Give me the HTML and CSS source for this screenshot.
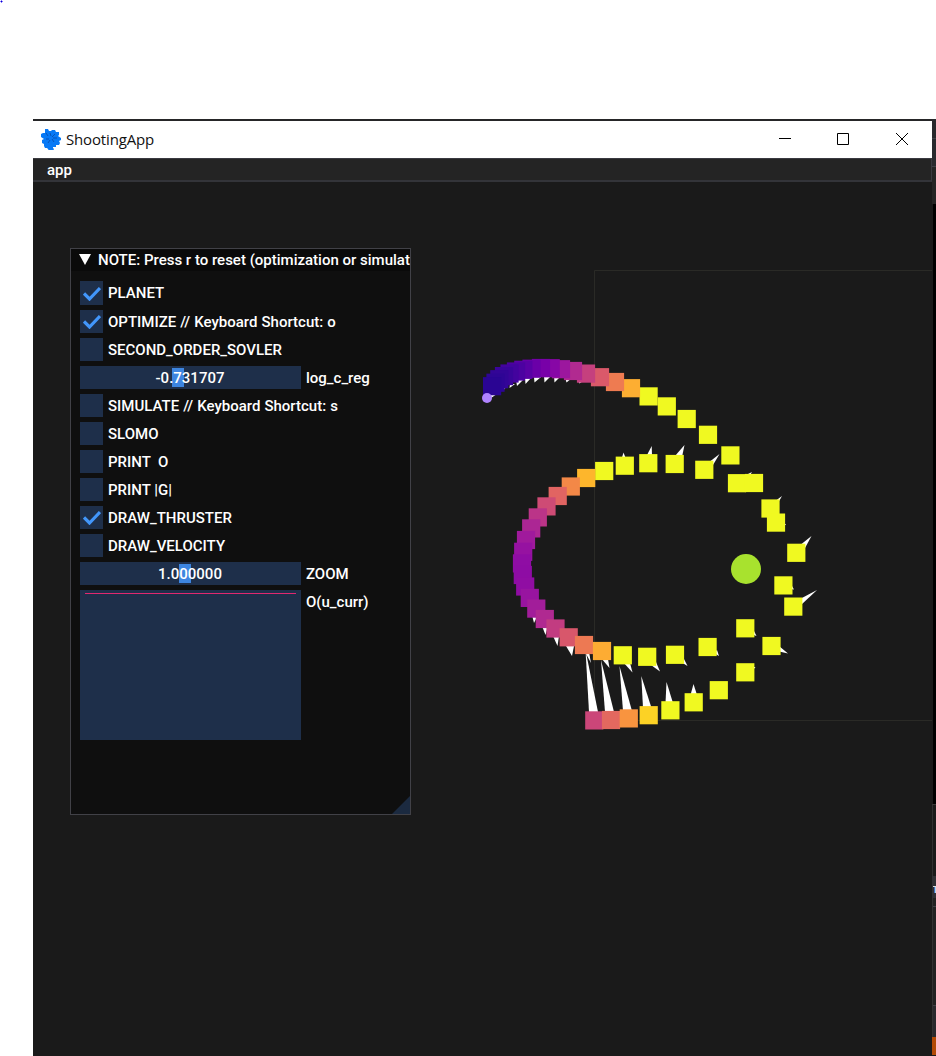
FILE: index.html
```html
<!DOCTYPE html>
<html lang="en">
<head>
<meta charset="utf-8">
<title>ShootingApp</title>
<link rel="stylesheet" href="styles.css">
</head>
<body>
<div class="desktop">
  <svg class="speck" width="3" height="3"><path d="M0 1.500h3M1.500 0v3" stroke="#8078ff"/><path d="M1 1h1v1h-1z" fill="#1000c0"/></svg>
  <div class="backdrop">
    <main class="window">
      <header class="titlebar">
        <svg class="logo" width="22" height="22" viewBox="0 0 22 22">
          <path d="M5 1h3l1 2h2l1-1h3l1 2h3v3l-1 1 3 2v2l-2 1 1 2-1 2h-3v2h-3v1l1 1-1 2h-4l-1-2-1-1H5l-1-2v-2l-2-1 0-3 2-1-3-2V6l2-1h2z" fill="#0879f5"/>
          <path d="M6 5l2 3M10 5l1 3M15 6l-3 3M6 11h3M8 15l2-3M14 14l-2-3M17 10l-4 0" stroke="#0753b8" fill="none"/>
        </svg>
        <span class="app-name">ShootingApp</span>
        <svg class="controls" width="130" height="14" viewBox="0 0 130 14" fill="none" stroke="#000">
          <path d="M0 5.500h12"/><path d="M58.500 .5h11v11h-11z"/><path d="M117 0l12 12M129 0l-12 12"/>
        </svg>
      </header>
      <nav class="menubar"><span>app</span></nav>
      <div class="canvas">
        <svg class="scene" id="scene" width="899" height="874" viewBox="33 182 899 874">
          <path d="M932 270.500H594.500V720.500H932" fill="none" stroke="#2a2a26"/>
          <circle cx="746" cy="569" r="15" fill="#a8e22e"/>
          <g id="thrust" fill="#fff"></g>
          <g id="trail"></g>
          <circle cx="487" cy="398" r="5" fill="#b083ff"/>
        </svg>
        <section class="panel">
          <div class="panel-title"><svg width="13" height="11"><path d="M0 0h12L6 11z" fill="#fff"/></svg><span>NOTE: Press r to reset (optimization or simulat</span></div>
          <div class="rows">
            <div class="row first"><i class="box on"><svg width="18" height="15"><path d="M1 7.500l5.500 5.500L17 2" /></svg></i><span>PLANET</span></div>
            <div class="row wide"><i class="box on"><svg width="18" height="15"><path d="M1 7.500l5.500 5.500L17 2" /></svg></i><span>OPTIMIZE // Keyboard Shortcut: o</span></div>
            <div class="row"><i class="box"></i><span>SECOND_ORDER_SOVLER</span></div>
            <div class="row"><div class="slider"><b class="grab g1"></b><span>-0.731707</span></div><span>log_c_reg</span></div>
            <div class="row wide"><i class="box"></i><span>SIMULATE // Keyboard Shortcut: s</span></div>
            <div class="row"><i class="box"></i><span>SLOMO</span></div>
            <div class="row"><i class="box"></i><span>PRINT  O</span></div>
            <div class="row"><i class="box"></i><span>PRINT |G|</span></div>
            <div class="row"><i class="box on"><svg width="18" height="15"><path d="M1 7.500l5.500 5.500L17 2" /></svg></i><span>DRAW_THRUSTER</span></div>
            <div class="row"><i class="box"></i><span>DRAW_VELOCITY</span></div>
            <div class="row"><div class="slider"><b class="grab g2"></b><span>1.000000</span></div><span>ZOOM</span></div>
            <div class="row plot-row"><div class="plot"></div><span>O(u_curr)</span></div>
          </div>
          <svg class="grip" width="18" height="18"><path d="M18 0v18H0z" fill="#1b2a40"/></svg>
        </section>
      </div>
    </main>
    <aside class="edge">
      <div class="e1"></div><div class="e2"></div><div class="e3"></div><div class="e4"></div><div class="e5"></div><div class="e6"></div><div class="e7"></div><div class="e8"></div>
    </aside>
  </div>
</div>
<script src="scene.js"></script>
</body>
</html>
```

FILE: styles.css
```css
body { margin: 0; background: #fff; font-family: Roboto, sans-serif; }
.desktop { width: 936px; height: 1056px; overflow: hidden; display: flex; flex-direction: column; }
.speck { display: block; flex: none; }
.backdrop { margin: 116px 0 0 33px; height: 937px; display: flex; background: #262628; }
.window { width: 899px; padding-top: 2px; display: flex; flex-direction: column; }
.titlebar { height: 37px; background: #fff; display: flex; align-items: center; }
.logo { margin-left: 7px; margin-top: -1px; }
.app-name { margin: -2px 0 0 4px; width: 92px; font: 15px/20px "Open Sans", sans-serif; color: #111; letter-spacing: -.15px; white-space: nowrap; }
.controls { margin-left: 621px; }
.menubar { box-sizing: border-box; height: 24px; background: #242424; border: 1px solid #3a3a40; border-left: 0; border-bottom: 2px solid #333439; padding-left: 14px; color: #fff; font-size: 15px; font-weight: 500; line-height: 22px; }
.canvas { height: 874px; background: #1a1a1a; position: relative; }
.scene { display: block; }
.panel { position: absolute; left: 37px; top: 66px; width: 339px; height: 565px; border: 1px solid #414147; background: #0f0f0f; color: #fff; font-size: 15px; font-weight: 500; overflow: hidden; }
.panel-title { height: 22px; background: #0a0a0a; display: flex; align-items: center; gap: 6px; padding-left: 8px; white-space: nowrap; }
.panel-title svg { flex: none; margin-top: -1px; }
.rows { padding: 10px 9px; display: flex; flex-direction: column; gap: 5px; }
.row { height: 23px; display: flex; gap: 5px; line-height: 25px; white-space: pre; }
.wide { word-spacing: .3px; }
.first { height: 24px; }
.box { width: 23px; background: #1e2f4a; display: flex; align-items: center; justify-content: center; }
.box path { fill: none; stroke: #4296fa; stroke-width: 3.2; }
.slider { width: 220px; padding-right: 1px; background: #1e2f4a; position: relative; text-align: center; }
.slider span { position: relative; }
.grab { position: absolute; top: 2px; width: 12px; height: 19px; background: #3d85e0; }
.g1 { left: 92px; }
.g2 { left: 99px; }
.plot-row { height: 150px; }
.plot { width: 211px; height: 147px; padding: 3px 5px 0; background: #1e2f4a; }
.plot::before { content: ""; display: block; height: 1px; background: #e02870; }
.grip { position: absolute; right: 0; bottom: 0; }
.edge { width: 4px; display: flex; flex-direction: column; background: #1a1a1a; }
.e1 { height: 19px; background: #29292c; border-bottom: 1px solid #404046; }
.e2 { height: 27px; background: #292a2e; border-bottom: 1px solid #404046; }
.e3 { height: 37px; background: #252525; }
.e4 { height: 600px; margin-left: 1px; background: #000; }
.e5 { height: 71px; border-top: 1px solid #3a3a3a; border-left: 1px solid #303030; background: #1a1a1a; }
.e6 { height: 22px; background: #303034; display: flex; }
.e6::before { content: ""; margin: 10px 0 0 1px; width: 3px; height: 7px; box-sizing: border-box; border-top: 1px solid #ddd; background: linear-gradient(90deg, #303034 1px, #3f6fc0 1px, #3f6fc0 2px, #b5d5e5 2px); }
.e7 { height: 139px; border-left: 1px solid #323232; background: linear-gradient(#222 8px, #414146 8px, #414146 9px, #222 9px, #222 107px, #414146 107px, #414146 108px, #29292d 108px); }
.e8 { height: 18px; background: #b24a06; }
```

FILE: scene.js
```js
const NS = "http://www.w3.org/2000/svg";
const Y = "#f0f921";

// Trajectory samples in time order: centre x, centre y, colour.
const samples = [
  [594.3,720.4,"#cb4679"],[611,720,"#e3685f"],[628.8,718.4,"#f9943f"],[648.7,715.2,"#fcd225"],
  [670.4,710.3,Y],[693.7,702.3,Y],[718.8,690.2,Y],[745.3,672.3,Y],[771.5,646,Y],[793.3,606.6,Y],
  [796.3,552.8,Y],[770.5,508.5,Y],[737,483.2,Y],[704.3,469.8,Y],[674.7,464,Y],[648.3,463.2,Y],
  [624.8,465.7,Y],[604.2,471,Y],[586.2,478,"#fdb62c"],[570.8,486.5,"#f38847"],[557.7,496,"#e16462"],
  [546.5,506.4,"#ce4b75"],[537.8,517.4,"#bb3488"],[531.2,528.4,"#ac2694"],[526,540,"#a01a9c"],
  [523.2,551.8,"#9612a1"],[522,563.4,"#8f0da4"],[522.8,575,"#8e0ca4"],[525.2,586.5,"#900da3"],
  [529.8,597.9,"#9814a0"],[536.3,608.6,"#a21d9a"],[544.8,619,"#b02991"],[555.5,628.5,"#c23c81"],
  [568.7,637.3,"#d8576b"],[584,645,"#ed7953"],[602,651,"#fdac33"],[622.8,655.3,Y],[647.2,656.8,Y],
  [675,654.8,Y],[707.6,647,Y],[745.3,628.3,Y],[783.4,585.4,Y],[776,522.6,Y],[754,483,Y],
  [730.4,455.4,Y],[708,434.8,Y],[686.7,419,Y],[666.8,406.4,Y],[648.6,396.4,Y],[631,388.2,"#fdae32"],
  [615,382,"#ee7b51"],[600,377.2,"#da596a"],[586,373.6,"#c5407e"],[573,371,"#b12a90"],
  [561,369.2,"#9c179e"],[550.7,368.2,"#8707a6"],[541,368,"#7801a8"],[531.5,368.7,"#6a00a8"],
  [523.3,369.8,"#5901a5"],[516,371.5,"#4c02a1"],[509.5,373.5,"#43039e"],[504,376.1,"#3a049a"],
  [499.3,379.2,"#330597"],[495.5,382.7,"#2e0595"],[492.1,386.2,"#2a0593"]
];

// Thruster flames, each a thin triangle whose base is under its square.
const flames = [
  "585.500,650 589,712 598,712", "601,660 605,712 614,712", "619.500,666 623,711 632,711",
  "641.300,676 643,708 651.500,708", "666.500,682 665.500,703 673,703", "693.500,684 690.500,695 697,695",
  "817,590 800,599 801,605", "788,653.500 779,646 777,651", "811.500,536 799,546 805,548",
  "782,496 774,502 778,503", "752,472 744,476 749,477", "719.500,454 708,463 713,465",
  "684.500,445 675,456 682,457", "651.700,446 646.500,456 652,456", "623.500,452.500 621.500,459 626,459",
  "534,623 532,615 538,615", "545.500,635 542,626 548,626", "557.500,646 553,636 559,636",
  "572,656 566,646 574,646", "591,663 585,652 589,652", "609.500,668 601,658 608,659",
  "632.500,672.500 623,662 630,663", "660,671.500 651,665 656,662", "687.500,666 681,662 684,659",
  "719,656 714,653 717,650", "756.500,636 751,634 754,631", "794,589.500 790,589 792,586",
  "755.500,667 753,667 753,670", "786,524.500 784,523 784,526",
  "495.500,395 490,394 491,398", "504,389.500 503,385 507,386", "509.500,388 510,384 515,384",
  "517,386 516,380 523,380", "525.500,384 525,378 531,378", "534.500,382.500 534,377 541,377",
  "544.500,382.500 544,376 551,376", "554.500,382.500 554,376 561,376", "566.500,382.500 565,377 572,378",
  "579.500,383.500 577,379 583,381"
];

function add(parent, tag, attrs) {
  const el = document.createElementNS(NS, tag);
  for (const key in attrs) el.setAttribute(key, attrs[key]);
  parent.appendChild(el);
}

const thrust = document.getElementById("thrust");
flames.forEach(points => add(thrust, "polygon", { points }));

const size = 18.2;
const trail = document.getElementById("trail");
samples.forEach(([x, y, fill]) =>
  add(trail, "rect", { x: x - size / 2, y: y - size / 2, width: size, height: size, fill }));
```
